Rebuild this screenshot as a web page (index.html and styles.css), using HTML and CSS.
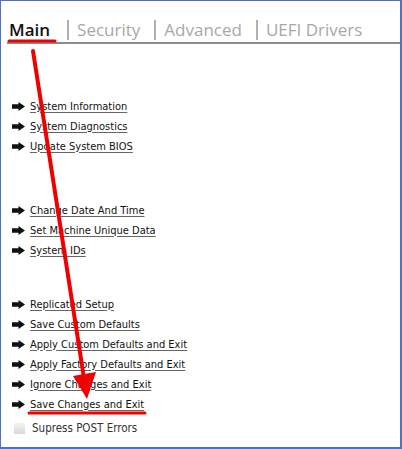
FILE: index.html
```html
<!DOCTYPE html>
<html>
<head>
<meta charset="utf-8">
<link rel="stylesheet" href="styles.css">
</head>
<body>
<div class="frame">
  <div class="tabs">
    <span class="tab active">Main</span>
    <span class="tab sep">Security</span>
    <span class="tab sep">Advanced</span>
    <span class="tab sep">UEFI Drivers</span>
  </div>
  <div class="menu">
    <div class="group g1">
      <div class="item"><svg class="arr" viewBox="0 0 13 9"><path d="M0 2.2H6.5V0L13 4.5L6.5 9V6.8H0Z"/></svg><span class="lbl">System Information</span></div>
      <div class="item"><svg class="arr" viewBox="0 0 13 9"><path d="M0 2.2H6.5V0L13 4.5L6.5 9V6.8H0Z"/></svg><span class="lbl">System Diagnostics</span></div>
      <div class="item"><svg class="arr" viewBox="0 0 13 9"><path d="M0 2.2H6.5V0L13 4.5L6.5 9V6.8H0Z"/></svg><span class="lbl">Update System BIOS</span></div>
    </div>
    <div class="group g2">
      <div class="item"><svg class="arr" viewBox="0 0 13 9"><path d="M0 2.2H6.5V0L13 4.5L6.5 9V6.8H0Z"/></svg><span class="lbl">Change Date And Time</span></div>
      <div class="item"><svg class="arr" viewBox="0 0 13 9"><path d="M0 2.2H6.5V0L13 4.5L6.5 9V6.8H0Z"/></svg><span class="lbl">Set Machine Unique Data</span></div>
      <div class="item"><svg class="arr" viewBox="0 0 13 9"><path d="M0 2.2H6.5V0L13 4.5L6.5 9V6.8H0Z"/></svg><span class="lbl">System IDs</span></div>
    </div>
    <div class="group g3">
      <div class="item"><svg class="arr" viewBox="0 0 13 9"><path d="M0 2.2H6.5V0L13 4.5L6.5 9V6.8H0Z"/></svg><span class="lbl">Replicated Setup</span></div>
      <div class="item"><svg class="arr" viewBox="0 0 13 9"><path d="M0 2.2H6.5V0L13 4.5L6.5 9V6.8H0Z"/></svg><span class="lbl">Save Custom Defaults</span></div>
      <div class="item"><svg class="arr" viewBox="0 0 13 9"><path d="M0 2.2H6.5V0L13 4.5L6.5 9V6.8H0Z"/></svg><span class="lbl">Apply Custom Defaults and Exit</span></div>
      <div class="item"><svg class="arr" viewBox="0 0 13 9"><path d="M0 2.2H6.5V0L13 4.5L6.5 9V6.8H0Z"/></svg><span class="lbl">Apply Factory Defaults and Exit</span></div>
      <div class="item"><svg class="arr" viewBox="0 0 13 9"><path d="M0 2.2H6.5V0L13 4.5L6.5 9V6.8H0Z"/></svg><span class="lbl">Ignore Changes and Exit</span></div>
      <div class="item"><svg class="arr" viewBox="0 0 13 9"><path d="M0 2.2H6.5V0L13 4.5L6.5 9V6.8H0Z"/></svg><span class="lbl">Save Changes and Exit</span></div>
    </div>
    <div class="check"><span class="box"></span><span class="clbl">Supress POST Errors</span></div>
  </div>
  <svg class="annot" viewBox="0 0 402 449" width="402" height="449">
    <line x1="9" y1="41" x2="55" y2="41" stroke="#f00000" stroke-width="3" stroke-linecap="round"/>
    <line x1="29" y1="413" x2="145" y2="413" stroke="#f00000" stroke-width="3" stroke-linecap="round"/>
    <line x1="33" y1="51" x2="84" y2="378" stroke="#f00000" stroke-width="4" stroke-linecap="round"/>
    <path d="M73 376 L96 372 L87 399 Z" fill="#f00000"/>
  </svg>
</div>
</body>
</html>
```
FILE: styles.css
```css
html, body {
  margin: 0;
  padding: 0;
  background: #fff;
}
.frame {
  position: relative;
  width: 402px;
  height: 449px;
  box-sizing: border-box;
  border-style: solid;
  border-color: #4a74c8;
  border-width: 1px 2px 2px 1px;
  background: #fff;
  overflow: hidden;
}
.tabs {
  display: flex;
  align-items: center;
  margin: 17px 0 0 6px;
  height: 24px;
  border-bottom: 2px solid #8c8c8c;
  font-family: "Open Sans", sans-serif;
  font-size: 17px;
  color: #a8a8a8;
}
.tab {
  line-height: 20px;
}
.tab.active {
  color: #111;
  font-weight: 600;
  padding: 0 4px 0 2px;
  margin-right: 13px;
}
.tab.sep {
  border-left: 2px solid #b0b0b0;
  padding-left: 8px;
  margin-right: 14px;
}
.menu {
  padding-left: 11px;
  font-family: "DejaVu Sans Condensed", "DejaVu Sans", sans-serif;
  font-size: 11px;
  color: #111;
}
.g1 { margin-top: 52px; }
.g2 { margin-top: 44px; }
.g3 { margin-top: 34px; }
.item {
  display: flex;
  align-items: center;
  height: 20px;
}
.arr {
  width: 13px;
  height: 9px;
  fill: #111;
  margin-right: 5px;
}
.lbl {
  text-decoration: underline;
  text-decoration-color: #666;
  text-underline-offset: 2px;
}
.check {
  display: flex;
  align-items: center;
  height: 20px;
  margin-top: 4px;
  padding-left: 2px;
}
.box {
  width: 11px;
  height: 11px;
  background: linear-gradient(#f4f4f4, #d8d8d8);
  margin-right: 7px;
}
.clbl {
  color: #333;
  font-size: 11.5px;
}
.annot {
  position: absolute;
  left: -1px;
  top: -1px;
  pointer-events: none;
}
```
